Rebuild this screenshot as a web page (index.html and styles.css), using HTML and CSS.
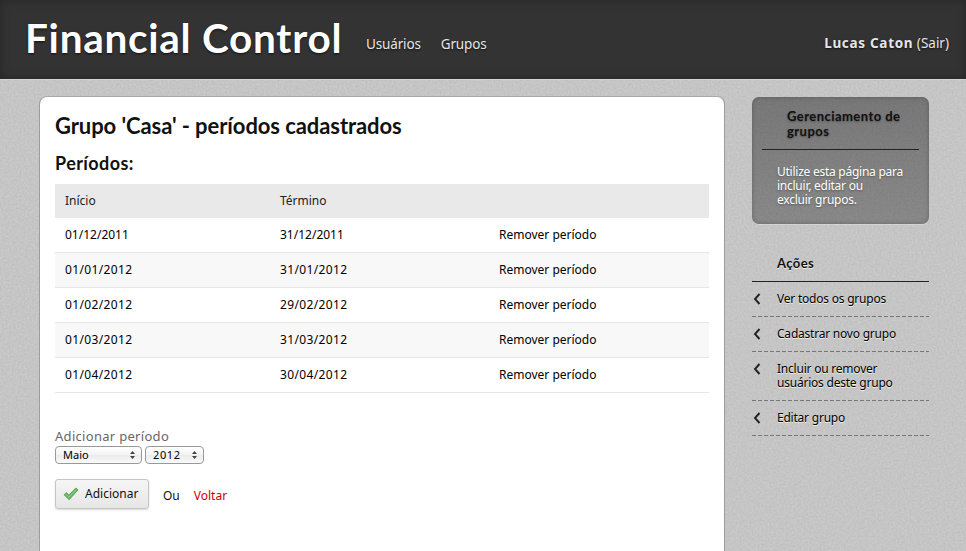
FILE: index.html
```html
<!DOCTYPE html>
<html lang="pt-BR">
<head>
<meta charset="utf-8">
<title>Financial Control</title>
<link rel="stylesheet" href="styles.css">
</head>
<body>
<svg class="texture" aria-hidden="true">
  <filter id="grain" x="0" y="0" width="100%" height="100%" color-interpolation-filters="sRGB">
    <feTurbulence type="fractalNoise" baseFrequency="0.5" numOctaves="2" seed="4"/>
    <feColorMatrix type="matrix" values="0.08 0 0 0 0.732  0.08 0 0 0 0.732  0.08 0 0 0 0.732  0 0 0 0 1"/>
  </filter>
  <rect width="100%" height="100%" filter="url(#grain)"/>
</svg>
<header class="header">
  <h1 class="brand">Financial Control</h1>
  <nav class="nav"><a>Usuários</a><a>Grupos</a></nav>
  <p class="session"><strong>Lucas Caton</strong> <a>(Sair)</a></p>
</header>
<div class="page">
  <main class="content">
    <h2 class="title">Grupo 'Casa' - períodos cadastrados</h2>
    <h3 class="subtitle">Períodos:</h3>
    <table class="periods">
      <thead><tr><th class="col-start">Início</th><th class="col-end">Término</th><th></th></tr></thead>
      <tbody>
        <tr><td>01/12/2011</td><td>31/12/2011</td><td><a>Remover período</a></td></tr>
        <tr><td>01/01/2012</td><td>31/01/2012</td><td><a>Remover período</a></td></tr>
        <tr><td>01/02/2012</td><td>29/02/2012</td><td><a>Remover período</a></td></tr>
        <tr><td>01/03/2012</td><td>31/03/2012</td><td><a>Remover período</a></td></tr>
        <tr><td>01/04/2012</td><td>30/04/2012</td><td><a>Remover período</a></td></tr>
      </tbody>
    </table>
    <form class="form">
      <label class="label">Adicionar período</label>
      <div class="selects">
        <span class="select month">Maio<svg width="5" height="8" viewBox="0 0 5 8"><path d="M0 3 2.5 0 5 3zM0 5h5L2.5 8z"/></svg></span>
        <span class="select year">2012<svg width="5" height="8" viewBox="0 0 5 8"><path d="M0 3 2.5 0 5 3zM0 5h5L2.5 8z"/></svg></span>
      </div>
      <div class="actions">
        <button class="button" type="button"><svg width="16" height="14" viewBox="0 0 16 14"><path d="M1 7.8 3.3 5.5 6 8.1 12.8 1 15 2.9 6.2 12.7z" fill="#69b965" stroke="#4f9a4d" stroke-width=".8" stroke-linejoin="round"/><path d="M2.8 7.2 6 10 13 2.6" fill="none" stroke="#8acb82" stroke-width="1"/></svg><span>Adicionar</span></button>
        <span class="or">Ou</span>
        <a class="back">Voltar</a>
      </div>
    </form>
  </main>
  <aside class="sidebar">
    <section class="help">
      <h3>Gerenciamento de<br>grupos</h3>
      <p>Utilize esta página para<br>incluir, editar ou<br>excluir grupos.</p>
    </section>
    <h3 class="menu-title">Ações</h3>
    <ul class="menu">
      <li><svg width="8" height="12" viewBox="0 0 8 12"><path d="M6.5 1 2 6 6.5 11"/></svg><a>Ver todos os grupos</a></li>
      <li><svg width="8" height="12" viewBox="0 0 8 12"><path d="M6.5 1 2 6 6.5 11"/></svg><a>Cadastrar novo grupo</a></li>
      <li><svg width="8" height="12" viewBox="0 0 8 12"><path d="M6.5 1 2 6 6.5 11"/></svg><a>Incluir ou remover<br>usuários deste grupo</a></li>
      <li><svg width="8" height="12" viewBox="0 0 8 12"><path d="M6.5 1 2 6 6.5 11"/></svg><a>Editar grupo</a></li>
    </ul>
  </aside>
</div>
</body>
</html>
```
FILE: styles.css
```css
* { box-sizing: border-box; }
html, body { height: 100%; }
body {
  margin: 0;
  overflow: hidden;
  display: flex;
  flex-direction: column;
  background: #c4c4c4;
  color: #111;
  font: 12px/14px "Noto Sans", sans-serif;
}
h1, h2, h3, p, ul { margin: 0; padding: 0; }
.texture { position: absolute; inset: 0; width: 100%; height: 100%; z-index: -1; }

.header {
  flex: none;
  height: 79px;
  display: flex;
  padding: 0 17px 0 25px;
  background: #333;
  box-shadow: inset 0 0 10px rgba(0, 0, 0, .28), 0 1px 0 #d4d4d4;
  color: #e6e6e6;
  text-shadow: 0 1px 2px #111;
}
.brand {
  width: 341px;
  color: #fff;
  font: 700 40.5px/76px Lato, sans-serif;
  letter-spacing: .73px;
  white-space: nowrap;
}
.nav { display: flex; gap: 20px; font-size: 13.5px; letter-spacing: -.15px; line-height: 88px; }
.session { margin-left: auto; font-size: 13.5px; line-height: 86px; }
.session strong { letter-spacing: .7px; }

.page { flex: 1; min-height: 0; display: flex; gap: 27px; padding: 17px 37px 0 39px; }
.content {
  width: 686px;
  padding: 15px 15px 0;
  background: #fff;
  border: 1px solid #9c9c9c;
  border-top-color: #a8a8a8;
  border-bottom: 0;
  border-radius: 8px 8px 0 0;
}
.title { font: 700 22px/28px Lato, sans-serif; letter-spacing: -.08px; }
.subtitle { margin-top: 12px; font: 700 18px/22px Lato, sans-serif; letter-spacing: .42px; }
.periods {
  width: 654px;
  margin-top: 10px;
  table-layout: fixed;
  border-collapse: separate;
  border-spacing: 0;
  color: #000;
}
.periods th { height: 34px; padding: 0 10px; background: #e9e9e9; font-weight: 400; text-align: left; color: #222; }
.col-start { width: 215px; }
.col-end { width: 219px; }
.periods td { height: 35px; padding: 0 10px; border-bottom: 1px solid #e6e6e6; }
.periods tbody tr:nth-child(even) { background: #f8f8f8; }
.periods tr + tr td:not(:last-child) { letter-spacing: .35px; }

.form { margin-top: 35px; }
.label { display: block; color: #666; font-size: 13px; line-height: 16px; letter-spacing: .3px; }
.selects { display: flex; gap: 3px; margin-top: 2px; }
.select {
  height: 18px;
  display: flex;
  align-items: center;
  justify-content: space-between;
  padding: 0 6px 0 7px;
  border: 1px solid #999;
  border-radius: 4px;
  background: linear-gradient(#fff, #f3f3f3 50%, #ebebeb 51%, #fafafa);
  color: #000;
  font-size: 11px;
}
.select svg { fill: #444; }
.month { width: 87px; }
.year { width: 59px; letter-spacing: .6px; }
.actions { display: flex; align-items: center; margin-top: 15px; }
.button {
  width: 94px;
  height: 30px;
  display: flex;
  align-items: center;
  gap: 6px;
  padding: 0 0 0 7px;
  border: 1px solid #c4c7be;
  border-radius: 3px;
  background: linear-gradient(#f6f6f6, #e6e6e6);
  box-shadow: 0 1px 2px rgba(0, 0, 0, .15);
  color: #111;
  font: 12px/14px "Noto Sans", sans-serif;
  white-space: nowrap;
}
.or { margin: 4px 0 0 14px; }
.back { margin: 4px 0 0 14px; color: #c00; }

.sidebar { width: 177px; padding-top: 1px; }
.help {
  height: 127px;
  padding: 12px 10px 0;
  border-radius: 7px;
  background: linear-gradient(rgba(0, 0, 0, .4), rgba(0, 0, 0, .31));
  box-shadow: inset 0 0 4px rgba(0, 0, 0, .25), 0 1px 0 rgba(255, 255, 255, .25);
  color: #fff;
}
.help h3 {
  height: 41px;
  padding-left: 25px;
  border-bottom: 1px solid #222;
  color: #111;
  font: 700 13px/15px Lato, sans-serif;
  letter-spacing: .45px;
  text-shadow: 0 1px 2px rgba(0, 0, 0, .35);
  white-space: nowrap;
}
.help p { padding: 15px 0 0 15px; text-shadow: 0 1px 2px #555; letter-spacing: -.25px; white-space: nowrap; }
.menu-title {
  margin-top: 31px;
  height: 27px;
  padding-left: 25px;
  border-bottom: 1px solid #222;
  font: 700 13px/16px Lato, sans-serif;
  letter-spacing: .4px;
  text-shadow: 0 1px 0 #eee;
}
.menu { list-style: none; color: #000; text-shadow: 0 1px 0 #eee; letter-spacing: -.22px; white-space: nowrap; }
.menu li {
  display: flex;
  align-items: flex-start;
  gap: 16px;
  padding: 10px 0 11px 1px;
  background: repeating-linear-gradient(90deg, #777 0 4px, transparent 4px 6px) 0 100% / 100% 1px no-repeat;
}
.menu svg { flex: none; margin-top: 1px; fill: none; stroke: #222; stroke-width: 1.9; }
```
